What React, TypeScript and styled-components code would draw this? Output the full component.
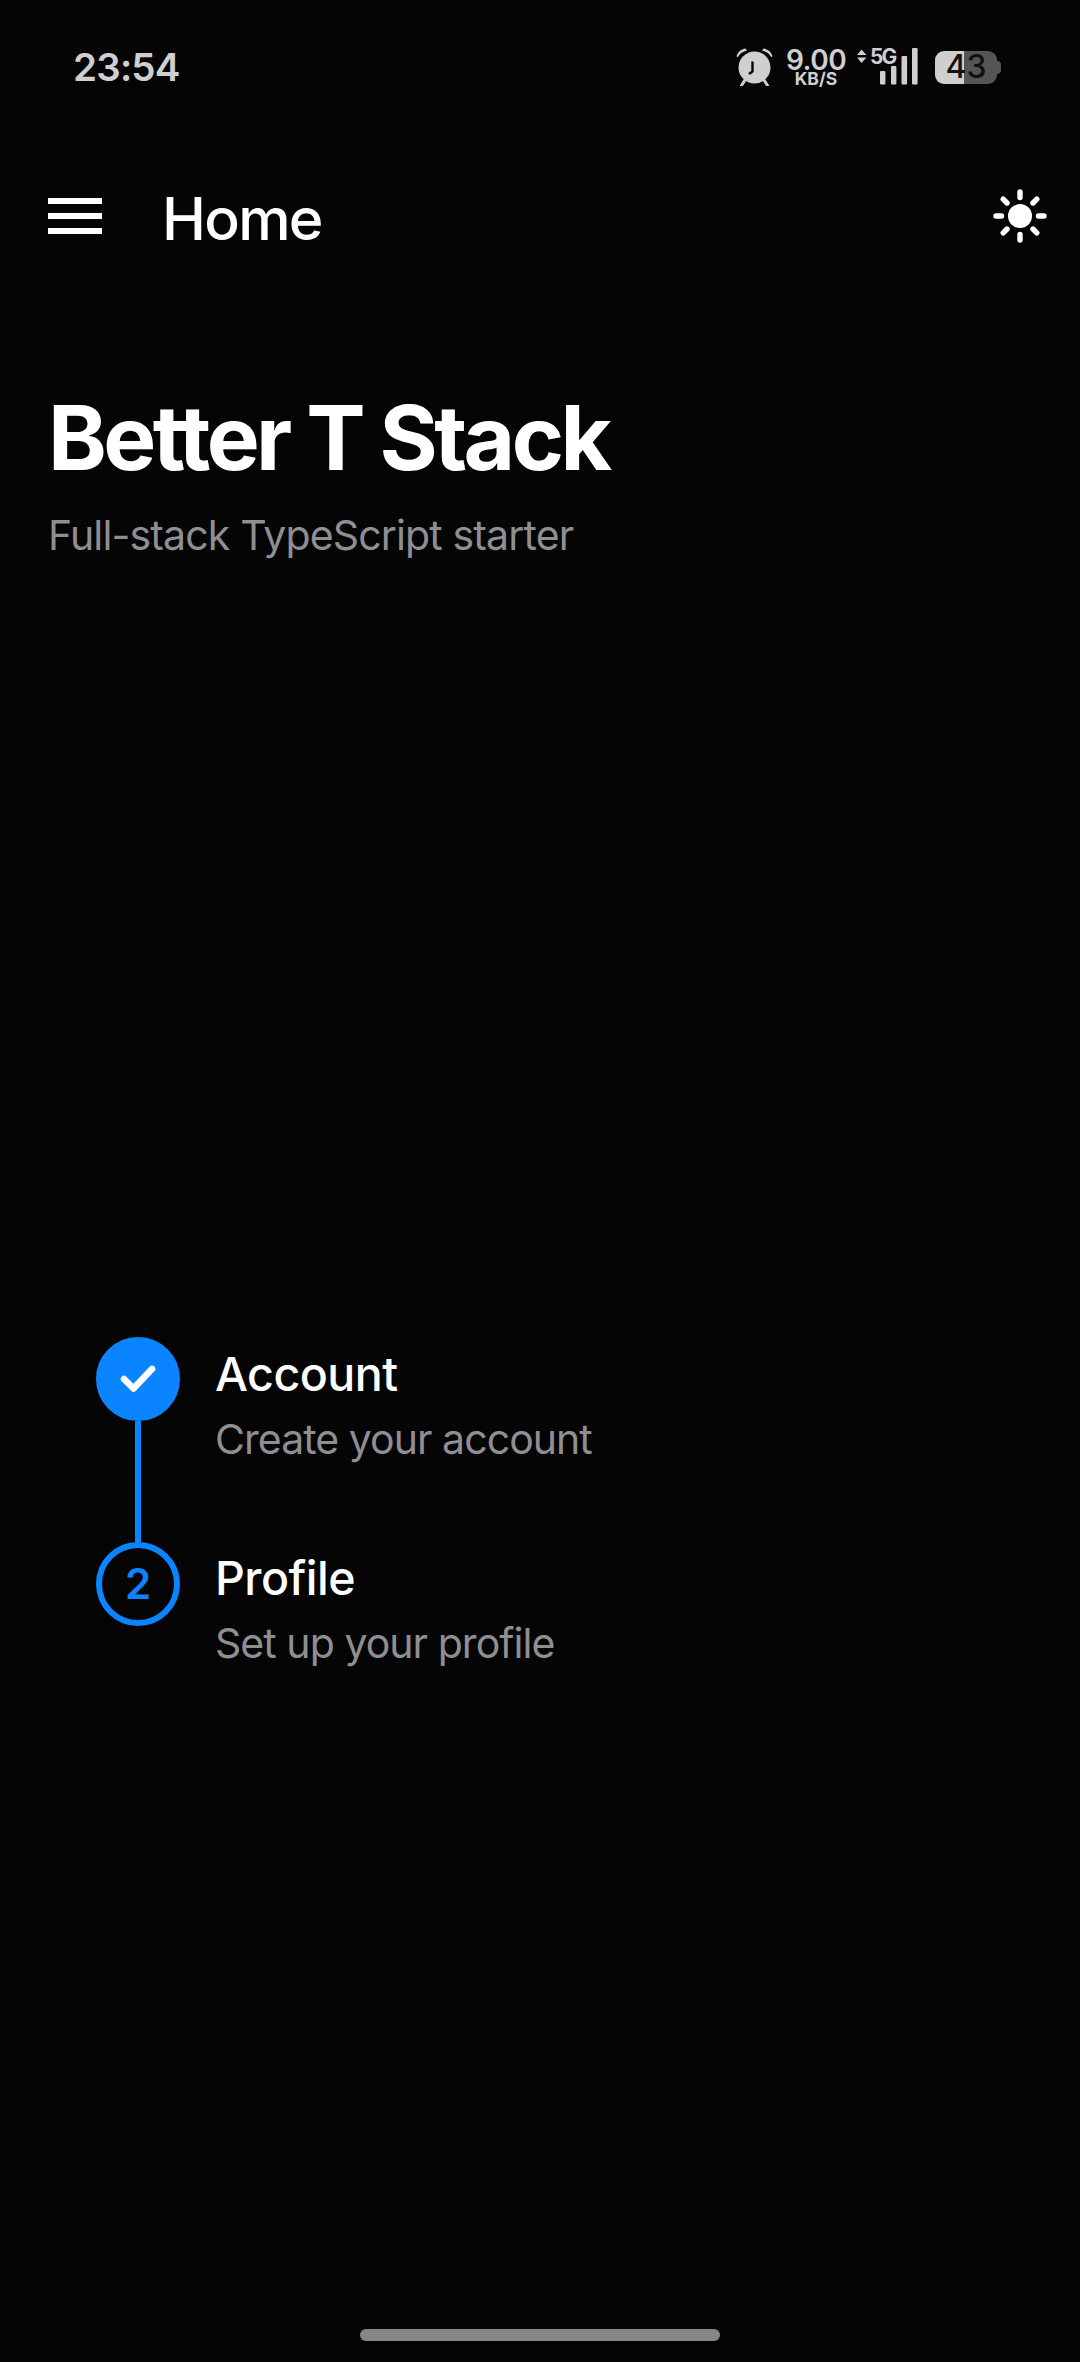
import React from "react";
import styled, { createGlobalStyle } from "styled-components";

const Global = createGlobalStyle`
  html, body { margin: 0; padding: 0; background: #050505; }
  * { box-sizing: border-box; }
`;

const Page = styled.div`
  width: 1080px;
  height: 2362px;
  background: #050505;
  display: flex;
  flex-direction: column;
  font-family: Inter, "Liberation Sans", sans-serif;
  color: #fff;
  overflow: hidden;
`;

const StatusBar = styled.div`
  height: 134px;
  padding: 0 79px 0 73px;
  display: flex;
  align-items: center;
  justify-content: space-between;
  color: #cfcfcf;
`;

const Clock = styled.span`
  font-size: 38.5px;
  font-weight: 600;
  line-height: 1;
  letter-spacing: -0.8px;
`;

const StatusIcons = styled.div`
  display: flex;
  align-items: center;
`;

const Speed = styled.div`
  width: 60px;
  margin: 0 11px 0 13px;
  display: flex;
  flex-direction: column;
  align-items: center;
  font-weight: 600;
`;

const SpeedValue = styled.span`
  font-size: 28px;
  line-height: 24px;
  letter-spacing: -0.5px;
  white-space: nowrap;
`;

const SpeedUnit = styled.span`
  font-size: 17.5px;
  font-weight: 700;
  line-height: 14px;
  white-space: nowrap;
`;

const Network = styled.div`
  position: relative;
  width: 61px;
  height: 38px;
  margin-right: 17px;
`;

const NetworkLabel = styled.span`
  position: absolute;
  left: 13px;
  top: -3px;
  font-size: 21px;
  font-weight: 700;
  line-height: 24px;
  letter-spacing: -1.8px;
`;

const Battery = styled.div`
  position: relative;
  width: 62px;
  height: 33px;
  margin-right: 4px;
  border-radius: 9px;
  background: linear-gradient(90deg, #cfcfcf 0 29px, #555 29px 100%);
  color: #111;
  display: flex;
  align-items: center;
  justify-content: center;
  font-size: 32px;
  font-weight: 500;
  line-height: 1;

  &::after {
    content: "";
    position: absolute;
    right: -4px;
    top: 10px;
    width: 4px;
    height: 13px;
    border-radius: 0 4px 4px 0;
    background: #555;
  }
`;

const Header = styled.header`
  height: 164px;
  padding: 0 33px 0 48px;
  display: flex;
  align-items: center;
`;

const Burger = styled.div`
  width: 54px;
  height: 36px;
  display: flex;
  flex-direction: column;
  justify-content: space-between;
`;

const BurgerBar = styled.span`
  display: block;
  height: 6px;
  background: #fff;
`;

const HeaderTitle = styled.h1`
  margin: 6px 0 0 60px;
  flex: 1;
  font-size: 59px;
  font-weight: 500;
  line-height: 64px;
  letter-spacing: -1.7px;
`;

const Hero = styled.section`
  padding: 86px 48px 0;
`;

const HeroTitle = styled.h2`
  margin: 0;
  font-size: 89px;
  font-weight: 700;
  line-height: 108px;
  letter-spacing: -3.6px;
`;

const HeroSubtitle = styled.p`
  margin: 19px 0 0;
  font-size: 41px;
  font-weight: 400;
  line-height: 48px;
  letter-spacing: -0.85px;
  color: #8e8e93;
`;

const Stepper = styled.ol`
  list-style: none;
  margin: 778px 0 0;
  padding: 0 0 0 96px;
`;

const Step = styled.li<{ $last?: boolean }>`
  display: flex;
  gap: 35px;
  height: ${(p) => (p.$last ? "84px" : "205px")};
`;

const Rail = styled.div`
  width: 84px;
  display: flex;
  flex-direction: column;
  align-items: center;
  flex-shrink: 0;
`;

const Dot = styled.div<{ $done?: boolean }>`
  width: 84px;
  height: 84px;
  border-radius: 50%;
  flex-shrink: 0;
  display: flex;
  align-items: center;
  justify-content: center;
  background: ${(p) => (p.$done ? "#0a84ff" : "transparent")};
  border: 6px solid #0a84ff;
  color: #0a84ff;
  font-size: 42px;
  font-weight: 600;
  line-height: 1;
`;

const Connector = styled.div`
  flex: 1;
  width: 6px;
  background: #0a84ff;
`;

const StepText = styled.div<{ $last?: boolean }>`
  display: flex;
  flex-direction: column;
  padding-top: ${(p) => (p.$last ? "8px" : "9px")};
`;

const StepTitle = styled.span`
  font-size: 46.5px;
  font-weight: 500;
  line-height: 56px;
  letter-spacing: -0.5px;
  white-space: nowrap;
`;

const StepHint = styled.span`
  margin-top: 13px;
  font-size: 41px;
  font-weight: 400;
  line-height: 48px;
  letter-spacing: -0.95px;
  color: #8e8e93;
  white-space: nowrap;
`;

const HomeBar = styled.div`
  margin: auto auto 21px;
  width: 360px;
  height: 12px;
  border-radius: 6px;
  background: #878787;
`;

const AlarmIcon = () => (
  <svg width="37" height="38" viewBox="0 0 37 38" fill="none">
    <circle cx="18.5" cy="19.5" r="16" fill="#cfcfcf" />
    <path d="M0.5 8.5 C1.5 4 5 1.2 9.5 0.5 L11 2.6 C6.8 3.6 4 5.6 2 9 Z" fill="#cfcfcf" />
    <path d="M36.5 8.5 C35.5 4 32 1.2 27.5 0.5 L26 2.6 C30.2 3.6 33 5.6 35 9 Z" fill="#cfcfcf" />
    <path d="M9 32 L5.5 37.5 M28 32 L31.5 37.5" stroke="#cfcfcf" strokeWidth="3" strokeLinecap="round" />
    <path d="M16.5 13.5 V23.5 L13 26" stroke="#050505" strokeWidth="2.4" strokeLinejoin="round" />
  </svg>
);

const NetworkIcon = () => (
  <svg width="61" height="38" viewBox="0 0 61 38" fill="#cfcfcf" style={{ position: "absolute", left: 0, top: 0 }}>
    <path d="M4.5 1.5 L9.5 7 H0 Z M4.5 15 L9.5 9.5 H0 Z" />
    <rect x="23" y="23" width="5.4" height="13.5" rx="1" />
    <rect x="34" y="18" width="5.4" height="18.5" rx="1" />
    <rect x="44.5" y="8" width="5.6" height="28.5" rx="1" />
    <rect x="55" y="0" width="5.6" height="36.5" rx="1" />
  </svg>
);

const SunIcon = () => (
  <svg width="54" height="54" viewBox="0 0 54 54" fill="none">
    <circle cx="27" cy="27" r="12" fill="#fff" />
    <g stroke="#fff" strokeWidth="5.4" strokeLinecap="round">
      <path d="M27 3 V8.5 M27 45.5 V51 M3 27 H8.5 M45.5 27 H51" />
      <path d="M10.2 10.2 L14 14 M40 40 L43.8 43.8 M43.8 10.2 L40 14 M14 40 L10.2 43.8" />
    </g>
  </svg>
);

const CheckIcon = () => (
  <svg width="36" height="30" viewBox="0 0 36 30" fill="none">
    <path d="M4 15 L13.5 24.5 L32 5" stroke="#fff" strokeWidth="6.6" strokeLinecap="round" strokeLinejoin="round" />
  </svg>
);

export default function App() {
  return (
    <Page>
      <Global />
      <StatusBar>
        <Clock>23:54</Clock>
        <StatusIcons>
          <AlarmIcon />
          <Speed>
            <SpeedValue>9.00</SpeedValue>
            <SpeedUnit>KB/S</SpeedUnit>
          </Speed>
          <Network>
            <NetworkIcon />
            <NetworkLabel>5G</NetworkLabel>
          </Network>
          <Battery>43</Battery>
        </StatusIcons>
      </StatusBar>
      <Header>
        <Burger>
          <BurgerBar />
          <BurgerBar />
          <BurgerBar />
        </Burger>
        <HeaderTitle>Home</HeaderTitle>
        <SunIcon />
      </Header>
      <Hero>
        <HeroTitle>Better T Stack</HeroTitle>
        <HeroSubtitle>Full-stack TypeScript starter</HeroSubtitle>
      </Hero>
      <Stepper>
        <Step>
          <Rail>
            <Dot $done>
              <CheckIcon />
            </Dot>
            <Connector />
          </Rail>
          <StepText>
            <StepTitle>Account</StepTitle>
            <StepHint>Create your account</StepHint>
          </StepText>
        </Step>
        <Step $last>
          <Rail>
            <Dot>2</Dot>
          </Rail>
          <StepText $last>
            <StepTitle>Profile</StepTitle>
            <StepHint>Set up your profile</StepHint>
          </StepText>
        </Step>
      </Stepper>
      <HomeBar />
    </Page>
  );
}
